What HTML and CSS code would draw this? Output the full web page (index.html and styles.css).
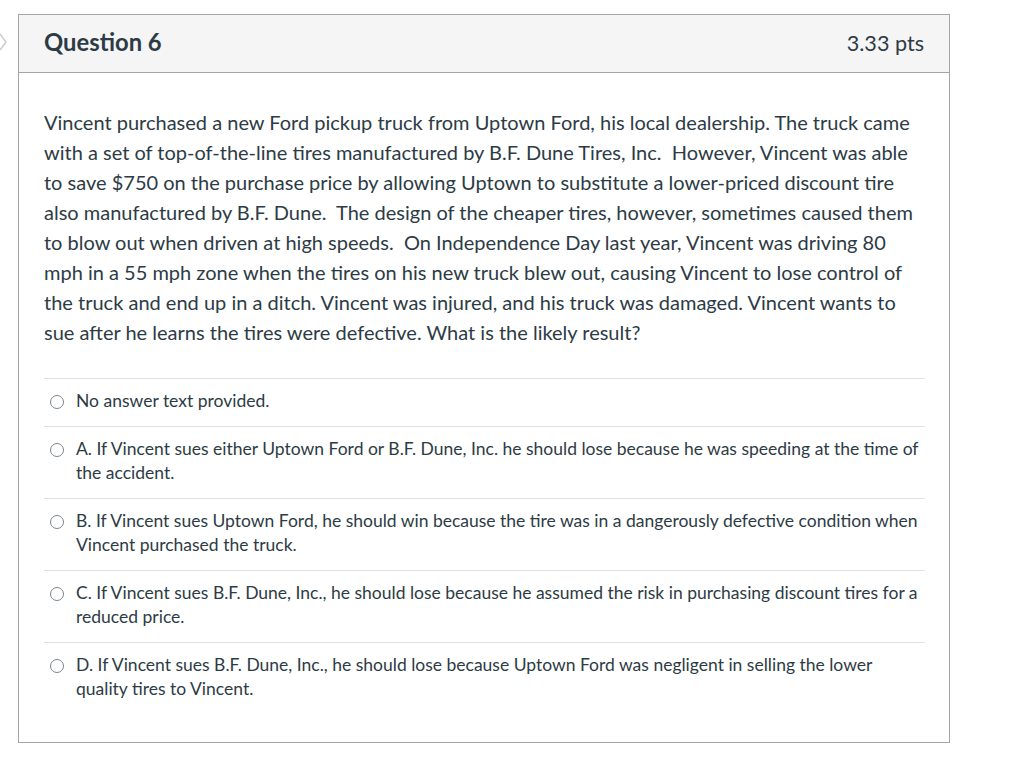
FILE: index.html
```html
<!DOCTYPE html>
<html>
<head>
<meta charset="utf-8">
<link rel="stylesheet" href="styles.css">
</head>
<body>
<div class="page">
  <svg class="nav-arrow" width="10" height="18" viewBox="0 0 10 18"><path d="M1 1 L7 9 L1 17" fill="none" stroke="#c7cdd1" stroke-width="1.5"/></svg>
  <div class="question">
    <div class="header">
      <span class="title">Question 6</span>
      <span class="pts">3.33 pts</span>
    </div>
    <div class="content">
      <p class="text">Vincent purchased a new Ford pickup truck from Uptown Ford, his local dealership. The truck came with a set of top-of-the-line tires manufactured by B.F. Dune Tires, Inc.&nbsp; However, Vincent was able to save $750 on the purchase price by allowing Uptown to substitute a lower-priced discount tire also manufactured by B.F. Dune.&nbsp; The design of the cheaper tires, however, sometimes caused them to blow out when driven at high speeds.&nbsp; On Independence Day last year, Vincent was driving 80 mph in a 55 mph zone when the tires on his new truck blew out, causing Vincent to lose control of the truck and end up in a ditch. Vincent was injured, and his truck was damaged. Vincent wants to sue after he learns the tires were defective. What is the likely result?</p>
      <div class="answers">
        <label class="answer"><span class="radio"></span><span class="atext">No answer text provided.</span></label>
        <label class="answer"><span class="radio"></span><span class="atext">A. If Vincent sues either Uptown Ford or B.F. Dune, Inc. he should lose because he was speeding at the time of the accident.</span></label>
        <label class="answer"><span class="radio"></span><span class="atext">B. If Vincent sues Uptown Ford, he should win because the tire was in a dangerously defective condition when Vincent purchased the truck.</span></label>
        <label class="answer"><span class="radio"></span><span class="atext">C. If Vincent sues B.F. Dune, Inc., he should lose because he assumed the risk in purchasing discount tires for a reduced price.</span></label>
        <label class="answer"><span class="radio"></span><span class="atext">D. If Vincent sues B.F. Dune, Inc., he should lose because Uptown Ford was negligent in selling the lower quality tires to Vincent.</span></label>
      </div>
    </div>
  </div>
</div>
</body>
</html>
```
FILE: styles.css
```css
html, body {
  margin: 0;
  padding: 0;
  background: #fff;
}
body {
  font-family: Lato, "Noto Sans", sans-serif;
  color: #2d3b45;
}
.page {
  position: relative;
  padding: 14px 0 0 18px;
}
.nav-arrow {
  position: absolute;
  left: -1px;
  top: 33px;
}
.question {
  width: 930px;
  border: 1px solid #a5a5a5;
}
.header {
  height: 57px;
  background: #f5f5f5;
  border-bottom: 1px solid #a5a5a5;
  display: flex;
  align-items: center;
  justify-content: space-between;
  padding: 0 25px;
}
.title {
  font-size: 23.8px;
  font-weight: 700;
  color: #2d3b45;
  padding-bottom: 4px;
}
.pts {
  font-size: 21.6px;
  color: #2d3b45;
  padding-bottom: 2px;
}
.content {
  padding: 34px 24px 28px 25px;
}
.text {
  margin: 0;
  font-size: 20px;
  line-height: 30px;
}
.answers {
  margin-top: 31px;
}
.answer {
  display: flex;
  align-items: flex-start;
  border-top: 1px solid #dde1e3;
  padding: 10px 0 13px 6px;
  font-size: 17.5px;
  line-height: 24px;
}
.radio {
  flex: none;
  width: 12px;
  height: 12px;
  border: 1px solid #7b868e;
  border-radius: 50%;
  margin: 6px 12px 0 0;
}
.atext {
  flex: 1;
}
```
